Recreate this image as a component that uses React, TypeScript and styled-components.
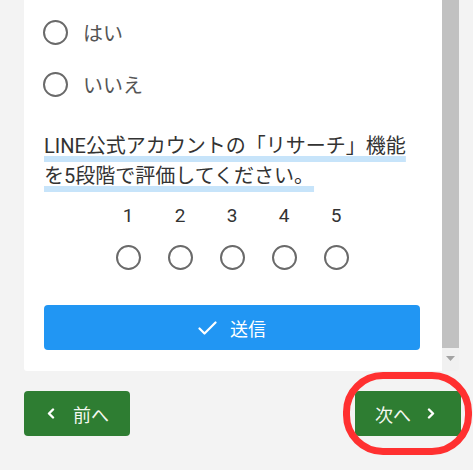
import React from "react";
import styled, { createGlobalStyle } from "styled-components";

const Global = createGlobalStyle`
  html, body { margin: 0; padding: 0; background: #f3f3f3; }
  body { font-family: Roboto, "Noto Sans CJK JP", "Noto Sans", sans-serif; }
  * { box-sizing: border-box; }
`;

const Page = styled.div`
  width: 473px;
  height: 470px;
  padding: 0 12px 0 24px;
  overflow: hidden;
`;

const Card = styled.div`
  display: flex;
  height: 371px;
  border-radius: 0 0 3px 3px;
  overflow: hidden;
  width: 435px;
`;

const CardBody = styled.div`
  flex: 1;
  background: #ffffff;
  padding: 7px 22px 21px 20px;
  display: flex;
  flex-direction: column;
`;

const Scrollbar = styled.div`
  width: 17px;
  display: flex;
  flex-direction: column;
  background: #f1f1f1;
`;

const Thumb = styled.div`
  flex: 1;
  background: #c1c1c1;
`;

const ScrollButton = styled.div`
  height: 23px;
  display: flex;
  align-items: flex-start;
  justify-content: center;
  padding-top: 8px;
`;

const RadioRow = styled.label`
  height: 52px;
  display: flex;
  align-items: center;
  gap: 15px;
  font-size: 20px;
  color: #555555;
`;

const RadioCircle = styled.span<{ $ml?: number }>`
  width: 25px;
  height: 25px;
  border-radius: 50%;
  border: 2.5px solid #6a6a6a;
  flex: none;
  margin-left: ${(p) => p.$ml ?? 0}px;
`;

const Question = styled.p`
  margin: 21px 0 0;
  font-size: 20px;
  line-height: 30px;
  color: #333333;
`;

const Marked = styled.span`
  text-decoration: underline;
  text-decoration-color: #c7e4fa;
  text-decoration-thickness: 6px;
  text-underline-offset: 3px;
  text-decoration-skip-ink: none;
`;

const Scale = styled.div`
  margin-top: 13px;
  display: grid;
  grid-template-columns: repeat(5, 52px);
  justify-content: center;
  row-gap: 17px;
  justify-items: center;
  align-items: center;
`;

const ScaleNum = styled.span`
  font-size: 19px;
  line-height: 24px;
  color: #333333;
`;

const SubmitButton = styled.button`
  margin-top: 35px;
  height: 45px;
  width: 100%;
  border: none;
  border-radius: 4px;
  background: #2196f3;
  color: #ffffff;
  display: flex;
  align-items: center;
  justify-content: center;
  gap: 13px;
  font-family: inherit;
  font-size: 18px;
  padding: 0;
`;

const Nav = styled.div`
  margin-top: 20px;
  display: flex;
  justify-content: space-between;
`;

const NavButton = styled.button<{ $pl: number; $pr: number; $gap: number }>`
  position: relative;
  height: 45px;
  width: 106px;
  border: none;
  border-radius: 4px;
  background: #2e7d32;
  color: #f4f8f0;
  display: flex;
  align-items: center;
  gap: ${(p) => p.$gap}px;
  padding: 0 ${(p) => p.$pr}px 0 ${(p) => p.$pl}px;
  font-family: inherit;
  font-size: 18px;
`;

const Highlight = styled.span`
  position: absolute;
  top: -19px;
  bottom: -19px;
  left: -12px;
  right: -11px;
  border: 7px solid #ff3030;
  border-radius: 40px;
  pointer-events: none;
`;

const Chevron = ({ dir }: { dir: "left" | "right" }) => (
  <svg width="8" height="11" viewBox="0 0 8 11" fill="none">
    <polyline
      points={dir === "left" ? "6,1.5 2,5.5 6,9.5" : "2,1.5 6,5.5 2,9.5"}
      stroke="#ffffff"
      strokeWidth="2.4"
      strokeLinecap="round"
      strokeLinejoin="round"
    />
  </svg>
);

export default function App() {
  return (
    <>
      <Global />
      <Page>
        <Card>
          <CardBody>
            <RadioRow>
              <RadioCircle $ml={-1} />
              はい
            </RadioRow>
            <RadioRow>
              <RadioCircle $ml={-1} />
              いいえ
            </RadioRow>
            <Question>
              <Marked>LINE公式アカウントの「リサーチ」機能を5段階で評価してください。</Marked>
            </Question>
            <Scale>
              {[1, 2, 3, 4, 5].map((n) => (
                <ScaleNum key={n}>{n}</ScaleNum>
              ))}
              {[1, 2, 3, 4, 5].map((n) => (
                <RadioCircle key={"c" + n} />
              ))}
            </Scale>
            <SubmitButton>
              <svg width="19" height="14" viewBox="0 0 19 14" fill="none">
                <polyline
                  points="1.5,7.5 6.5,12.5 17.5,1.5"
                  stroke="#ffffff"
                  strokeWidth="2.2"
                  strokeLinecap="round"
                  strokeLinejoin="round"
                />
              </svg>
              送信
            </SubmitButton>
          </CardBody>
          <Scrollbar>
            <Thumb />
            <ScrollButton>
              <svg width="9" height="5" viewBox="0 0 9 5">
                <polygon points="0,0 9,0 4.5,5" fill="#a3a3a3" />
              </svg>
            </ScrollButton>
          </Scrollbar>
        </Card>
        <Nav>
          <NavButton $pl={23} $pr={20} $gap={18}>
            <Chevron dir="left" />
            前へ
          </NavButton>
          <NavButton $pl={20} $pr={22} $gap={16}>
            次へ
            <Chevron dir="right" />
            <Highlight />
          </NavButton>
        </Nav>
      </Page>
    </>
  );
}
